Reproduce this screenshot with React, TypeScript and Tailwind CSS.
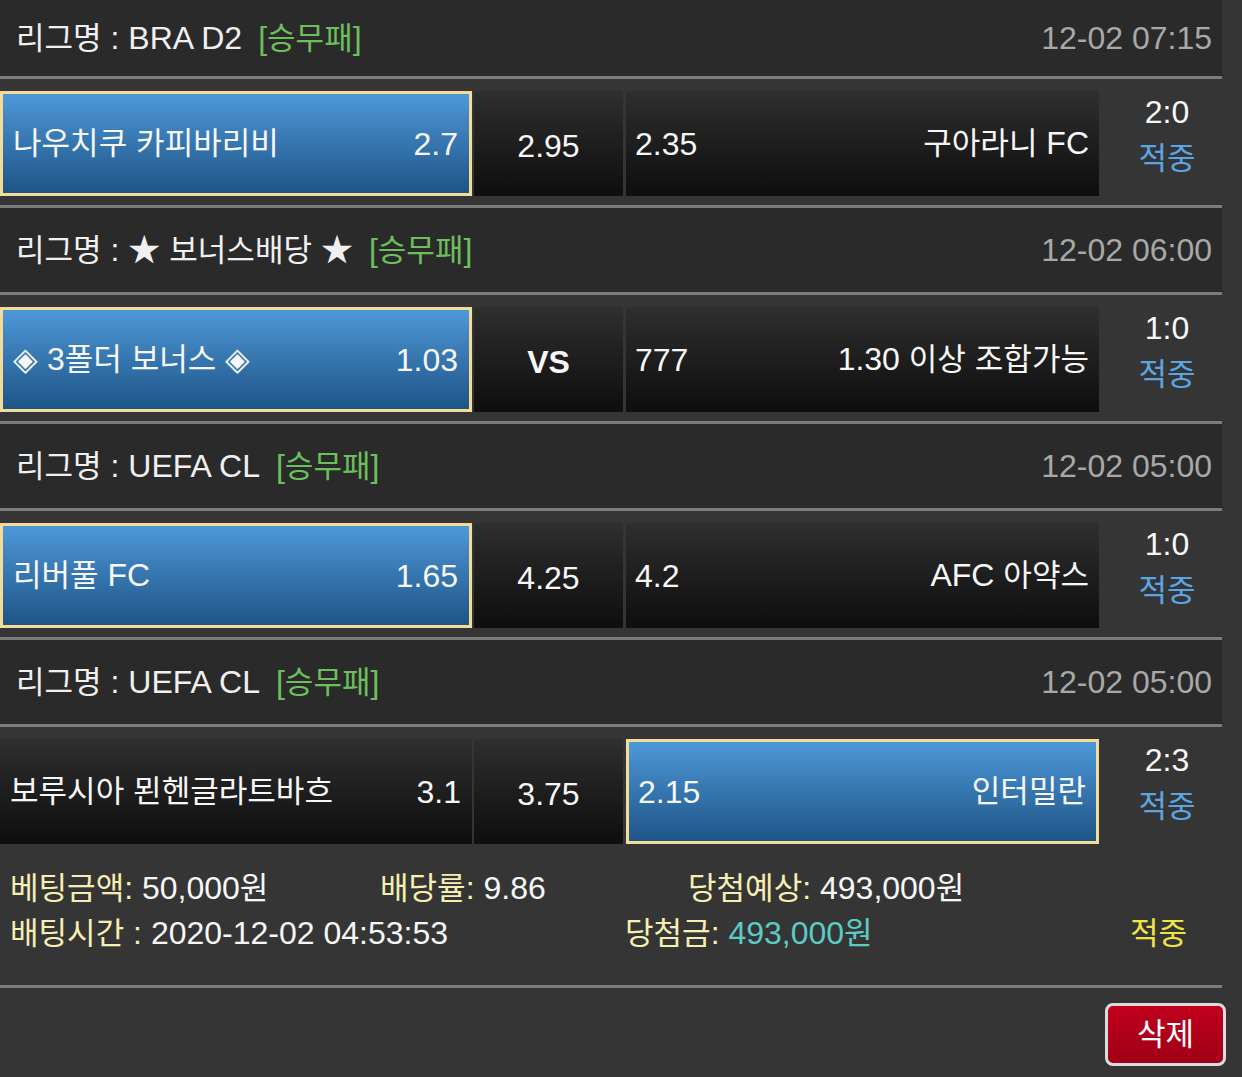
const HANGUL = /([\uAC00-\uD7A3]+)/

// hangul runs sized a touch down so the CJK font keeps the reference's width
function Tx({ s }: { s: string }) {
    return (
        <>
            {s.split(HANGUL).map((p, i) =>
                HANGUL.test(p) ? <span key={i} className="text-[0.97em]">{p}</span> : p
            )}
        </>
    )
}

type game = {
    league: string
    date: string
    home: string
    homeOdd: string
    draw: string
    away: string
    awayOdd: string
    score: string
    pick: "home" | "away"
    first?: boolean
}

const games: game[] = [
    { league: "BRA D2", date: "12-02 07:15", home: "나우치쿠 카피바리비", homeOdd: "2.7", draw: "2.95", awayOdd: "2.35", away: "구아라니 FC", score: "2:0", pick: "home", first: true },
    { league: "★ 보너스배당 ★", date: "12-02 06:00", home: "◈ 3폴더 보너스 ◈", homeOdd: "1.03", draw: "VS", awayOdd: "777", away: "1.30 이상 조합가능", score: "1:0", pick: "home" },
    { league: "UEFA CL", date: "12-02 05:00", home: "리버풀 FC", homeOdd: "1.65", draw: "4.25", awayOdd: "4.2", away: "AFC 아약스", score: "1:0", pick: "home" },
    { league: "UEFA CL", date: "12-02 05:00", home: "보루시아 묀헨글라트바흐", homeOdd: "3.1", draw: "3.75", awayOdd: "2.15", away: "인터밀란", score: "2:3", pick: "away" },
]

const blue = "bg-gradient-to-b from-[#4e98d8] to-[#1e5587] border-[3px] border-[#f2dc98]"
const dark = "bg-gradient-to-b from-[#2f2f2f] to-[#0e0e0e]"

function Line() {
    return <div className="h-[3px] bg-[#7b7b7b]" />
}

function Game({ g }: { g: game }) {
    return (
        <div>
            <div className={`${g.first ? "h-[76px]" : "h-[84px]"} bg-[#2a2a2a] flex items-center justify-between pl-[16px] pr-[10px]`}>
                <div className="flex items-center text-[#f0f0f0]">
                    <span><Tx s={`리그명 : ${g.league}`} /></span>
                    <span className="ml-[16px] text-[#6cbf5c]"><Tx s="[승무패]" /></span>
                </div>
                <span className="text-[#a8a8a8]">{g.date}</span>
            </div>
            <Line />
            <div className="h-[126px] pt-[12px] pb-[9px] flex">
                <div className={`w-[472px] flex items-center justify-between pl-[10px] pr-[11px] ${g.pick === "home" ? blue : dark}`}>
                    <span><Tx s={g.home} /></span>
                    <span>{g.homeOdd}</span>
                </div>
                <div className={`w-[149px] ml-[2px] flex items-center justify-center pt-[4px] ${dark} ${g.draw === "VS" ? "font-bold" : ""}`}>
                    {g.draw}
                </div>
                <div className={`w-[473px] ml-[3px] flex items-center justify-between pl-[9px] pr-[10px] ${g.pick === "away" ? blue : dark}`}>
                    <span>{g.awayOdd}</span>
                    <span><Tx s={g.away} /></span>
                </div>
                <div className="w-[123px] flex flex-col items-center justify-center pl-[13px] pb-[17px] leading-[46px]">
                    <span>{g.score}</span>
                    <span className="text-[#5aa5e3]"><Tx s="적중" /></span>
                </div>
            </div>
        </div>
    )
}

export default function App() {
    return (
        <div className="w-[1242px] min-h-[1077px] bg-[#353535] text-[#f7f7f7] text-[32px] leading-none font-['Liberation_Sans','Noto_Sans_CJK_KR',sans-serif]">
            <div className="w-[1222px]">
                {games.map((g, i) => (
                    <div key={i}>
                        <Game g={g} />
                        {i < games.length - 1 && <Line />}
                    </div>
                ))}
                <div className="pt-[13px] pb-[29px] flex flex-col">
                    <div className="h-[45px] flex items-center pl-[10px]">
                        <div className="w-[370px]"><span className="text-[#f5efb3]"><Tx s="베팅금액:" /></span> <Tx s="50,000원" /></div>
                        <div className="w-[308px]"><span className="text-[#f5efb3]"><Tx s="배당률:" /></span> 9.86</div>
                        <div><span className="text-[#f5efb3]"><Tx s="당첨예상:" /></span> <Tx s="493,000원" /></div>
                    </div>
                    <div className="h-[45px] flex items-center pl-[10px]">
                        <div className="w-[615px]"><span className="text-[#f5efb3]"><Tx s="배팅시간 :" /></span> 2020-12-02 04:53:53</div>
                        <div className="w-[505px]"><span className="text-[#f5efb3]"><Tx s="당첨금:" /></span> <span className="text-[#5ccbc6]"><Tx s="493,000원" /></span></div>
                        <div className="text-[#f0e442]"><Tx s="적중" /></div>
                    </div>
                </div>
                <Line />
            </div>
            <div className="flex justify-end pt-[15px] pr-[16px] pb-[11px]">
                <button className="w-[121px] h-[63px] rounded-lg border-[3px] border-[#dcdcdc] bg-gradient-to-b from-[#c0001c] to-[#a00018] text-white flex items-center justify-center">
                    <Tx s="삭제" />
                </button>
            </div>
        </div>
    )
}
